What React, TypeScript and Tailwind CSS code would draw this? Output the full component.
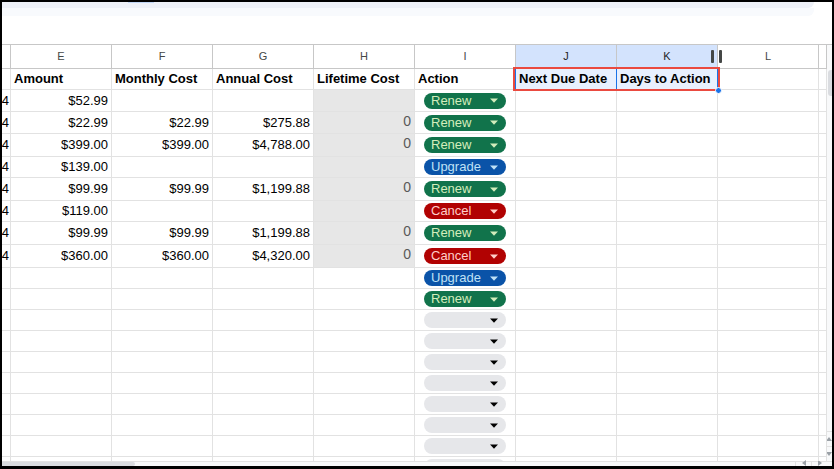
import React from 'react';

type Chip = 'Renew' | 'Upgrade' | 'Cancel' | '';

interface RowData {
  h: 21 | 22 | 23;
  d?: string;
  e?: string;
  f?: string;
  g?: string;
  hv?: string;
  gray?: boolean;
  chip: Chip;
}

const hCls: Record<number, string> = {
  21: 'h-[21px]',
  22: 'h-[22px]',
  23: 'h-[23px]',
};

const chipCls: Record<string, string> = {
  Renew: 'bg-[#11734b] text-[#d4edbc]',
  Upgrade: 'bg-[#0a53a8] text-[#bfe1f6]',
  Cancel: 'bg-[#b10202] text-[#ffcfc9]',
  '': 'bg-[#e6e7ea] text-black',
};

const rows: RowData[] = [
  { h: 22, d: '2024', e: '$52.99', gray: true, chip: 'Renew' },
  { h: 22, d: '2024', e: '$22.99', f: '$22.99', g: '$275.88', hv: '0', gray: true, chip: 'Renew' },
  { h: 23, d: '2024', e: '$399.00', f: '$399.00', g: '$4,788.00', hv: '0', gray: true, chip: 'Renew' },
  { h: 21, d: '2024', e: '$139.00', gray: true, chip: 'Upgrade' },
  { h: 23, d: '2024', e: '$99.99', f: '$99.99', g: '$1,199.88', hv: '0', gray: true, chip: 'Renew' },
  { h: 21, d: '2024', e: '$119.00', gray: true, chip: 'Cancel' },
  { h: 23, d: '2024', e: '$99.99', f: '$99.99', g: '$1,199.88', hv: '0', gray: true, chip: 'Renew' },
  { h: 23, d: '2024', e: '$360.00', f: '$360.00', g: '$4,320.00', hv: '0', gray: true, chip: 'Cancel' },
  { h: 21, chip: 'Upgrade' },
  { h: 21, chip: 'Renew' },
  { h: 21, chip: '' },
  { h: 21, chip: '' },
  { h: 21, chip: '' },
  { h: 21, chip: '' },
  { h: 21, chip: '' },
  { h: 21, chip: '' },
  { h: 21, chip: '' },
  { h: 21, chip: '' },
];

const FONT = { fontFamily: '"Liberation Sans", Arial, sans-serif' };

function Arrow({ dark }: { dark?: boolean }) {
  return (
    <svg width="8" height="5" viewBox="0 0 8 5" className={dark ? 'text-black' : ''}>
      <path d="M0 0.5h8L4 4.8z" fill="currentColor" />
    </svg>
  );
}

function ChipCell({ chip }: { chip: Chip }) {
  return (
    <div className="w-[101px] shrink-0 border-r border-[#e2e2e2] flex items-center">
      <div
        className={`ml-[9px] w-[82px] h-[16px] rounded-full flex items-center justify-between pl-[7px] pr-[8px] text-[13px] leading-[16px] ${chipCls[chip]}`}
      >
        <span>{chip}</span>
        <Arrow />
      </div>
    </div>
  );
}

function NumCell({ v, gray, zero }: { v?: string; gray?: boolean; zero?: boolean }) {
  return (
    <div
      className={`w-[101px] shrink-0 border-r border-[#e2e2e2] flex items-center justify-end pr-[3px] text-[13px] ${
        gray ? 'bg-[#e7e7e7]' : ''
      } ${zero ? 'text-[#595959] text-[14px] pb-[3px]' : 'text-black'}`}
    >
      {v}
    </div>
  );
}

function Blank({ sel }: { sel?: boolean }) {
  return <div className={`w-[101px] shrink-0 border-r border-[#e2e2e2] ${sel ? 'bg-[#e8f0fe]' : ''}`} />;
}

function HeaderCell({ t, sel }: { t: string; sel?: boolean }) {
  return (
    <div
      className={`w-[101px] shrink-0 border-r border-[#e2e2e2] flex items-center pl-[3px] text-[13px] font-bold text-black whitespace-nowrap overflow-hidden ${
        sel ? 'bg-[#e8f0fe]' : ''
      }`}
    >
      {t}
    </div>
  );
}

export default function App() {
  const letters = ['E', 'F', 'G', 'H', 'I', 'J', 'K', 'L'];
  return (
    <div className="w-[834px] h-[469px] bg-black pt-[2px] pl-[2px] pr-[2px] pb-[3px] overflow-hidden" style={FONT}>
      <div className="w-[830px] h-[464px] bg-white flex flex-col overflow-hidden">
        {/* top band */}
        <div className="h-[42px] shrink-0 relative">
          <div className="h-[6px] w-[812px] bg-[#eef1f8] rounded-br-[6px]" />
          <div className="h-[8px] w-[812px] bg-[#f8fafd] rounded-br-[6px]" />
          <div className="absolute left-[126px] top-0 w-[26px] h-[1px] bg-[#c2d7f7]" />
        </div>

        {/* grid area */}
        <div className="h-[417px] shrink-0 border-t border-[#c7c7c7] flex">
          <div className="w-[825px] shrink-0 relative overflow-hidden">
            {/* column header row */}
            <div className="h-[24px] flex border-b border-[#c7c7c7]">
              <div className="w-[9px] shrink-0 border-r border-[#c7c7c7]" />
              {letters.map((l) => (
                <div
                  key={l}
                  className={`w-[101px] shrink-0 border-r border-[#c7c7c7] flex items-center justify-center text-[11px] ${
                    l === 'J' || l === 'K' ? 'bg-[#d3e3fd] text-[#1f1f1f]' : 'text-[#444746]'
                  }`}
                >
                  {l}
                </div>
              ))}
              <div className="w-[8px] shrink-0 border-r border-[#c7c7c7]" />
            </div>

            {/* header data row */}
            <div className="h-[21px] flex border-b border-[#e2e2e2]">
              <div className="w-[9px] shrink-0 border-r border-[#e2e2e2]" />
              <HeaderCell t="Amount" />
              <HeaderCell t="Monthly Cost" />
              <HeaderCell t="Annual Cost" />
              <HeaderCell t="Lifetime Cost" />
              <HeaderCell t="Action" />
              <HeaderCell t="Next Due Date" sel />
              <HeaderCell t="Days to Action" sel />
              <Blank />
              <div className="w-[8px] shrink-0 border-r border-[#e2e2e2]" />
            </div>

            {rows.map((r, i) => (
              <div key={i} className={`${hCls[r.h]} shrink-0 flex border-b border-[#e2e2e2]`}>
                <div className="w-[9px] shrink-0 border-r border-[#e2e2e2] flex items-center justify-end pr-[1px] overflow-hidden text-[13px] text-black">
                  {r.d}
                </div>
                <NumCell v={r.e} />
                <NumCell v={r.f} />
                <NumCell v={r.g} />
                <NumCell v={r.hv} gray={r.gray} zero />
                <ChipCell chip={r.chip} />
                <Blank />
                <Blank />
                <Blank />
                <div className="w-[8px] shrink-0 border-r border-[#e2e2e2]" />
              </div>
            ))}

            {/* column K resize handle */}
            <div className="absolute left-[709px] top-[5px] w-[3px] h-[13px] rounded-[1px] bg-[#444746]" />
            <div className="absolute left-[717px] top-[5px] w-[3px] h-[13px] rounded-[1px] bg-[#444746]" />

            {/* selection */}
            <div className="absolute left-[513px] top-[23px] w-[203px] h-[22px] border border-[#1a73e8]" />
            <div className="absolute left-[614px] top-[23px] w-[1px] h-[22px] bg-[#1a73e8]" />
            <div className="absolute left-[511px] top-[22px] w-[207px] h-[24px] border-2 border-[#ea4a40]" />
            <div className="absolute left-[713px] top-[42px] w-[7px] h-[7px] rounded-full bg-[#1a73e8] border border-white" />
          </div>
          {/* vertical scrollbar */}
          <div className="w-[5px] shrink-0 bg-[#f8f9fa] flex flex-col">
            <div className="h-[25px]" />
            <div className="h-[26px] rounded-l-[3px] bg-[#dadce0] ml-[1px]" />
            <div className="flex-1" />
            <div className="h-[15px] border-t border-[#e2e2e2] flex items-center justify-end">
              <div className="w-0 h-0 border-l-[3px] border-r-[3px] border-b-[4px] border-l-transparent border-r-transparent border-b-[#9aa0a6]" />
            </div>
            <div className="h-[15px] border-t border-[#e2e2e2] flex items-center justify-end">
              <div className="w-0 h-0 border-l-[3px] border-r-[3px] border-t-[4px] border-l-transparent border-r-transparent border-t-[#9aa0a6]" />
            </div>
          </div>
        </div>

        {/* horizontal scrollbar */}
        <div className="h-[5px] shrink-0 bg-[#f8f9fa] flex items-stretch border-t border-[#e2e2e2]">
          <div className="w-[133px] rounded-r-[3px] bg-[#dadce0]" />
          <div className="flex-1" />
          <div className="w-[16px] border-l border-[#e2e2e2] flex justify-center items-end">
            <div className="w-0 h-0 border-t-[3px] border-b-[3px] border-r-[4px] border-t-transparent border-b-transparent border-r-[#9aa0a6]" />
          </div>
          <div className="w-[16px] border-l border-[#e2e2e2] flex justify-center items-end">
            <div className="w-0 h-0 border-t-[3px] border-b-[3px] border-l-[4px] border-t-transparent border-b-transparent border-l-[#9aa0a6]" />
          </div>
          <div className="w-[5px]" />
        </div>
      </div>
    </div>
  );
}
